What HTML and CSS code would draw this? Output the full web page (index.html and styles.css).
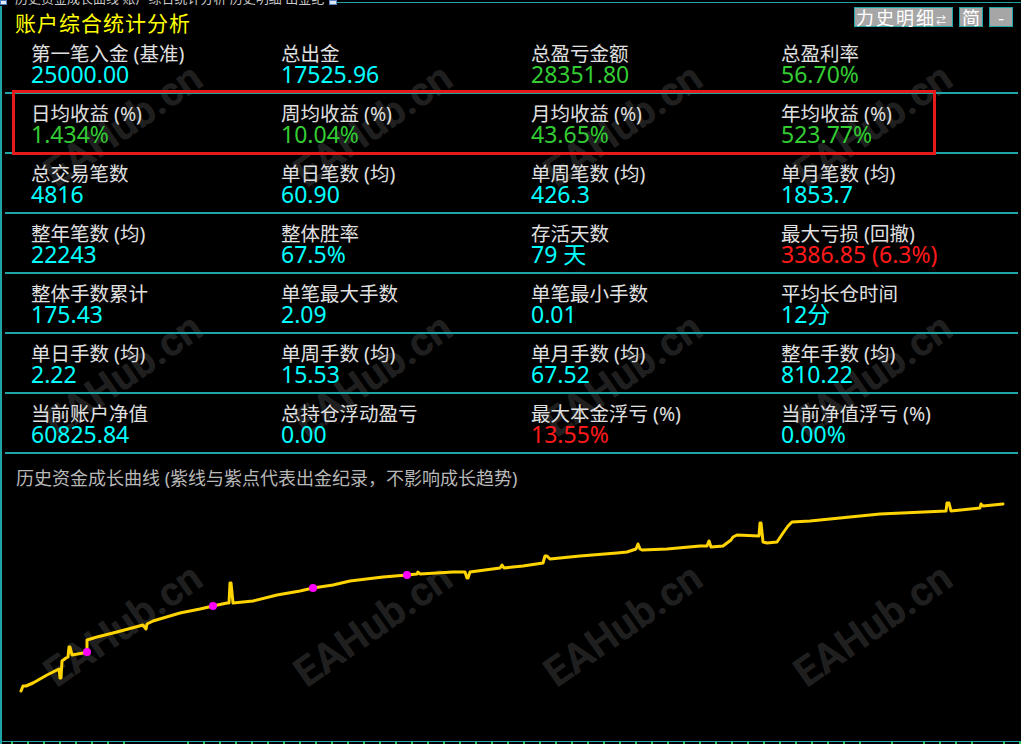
FILE: index.html
```html
<!DOCTYPE html>
<html lang="zh-CN">
<head>
<meta charset="utf-8">
<title>账户综合统计分析</title>
<link rel="stylesheet" href="styles.css">
</head>
<body>
<div class="window">
  <div class="wm-layer">
    <div class="wm"><span>EAHub.cn</span></div>
    <div class="wm"><span>EAHub.cn</span></div>
    <div class="wm"><span>EAHub.cn</span></div>
    <div class="wm"><span>EAHub.cn</span></div>
    <div class="wm"><span>EAHub.cn</span></div>
    <div class="wm"><span>EAHub.cn</span></div>
    <div class="wm"><span>EAHub.cn</span></div>
    <div class="wm"><span>EAHub.cn</span></div>
    <div class="wm"><span>EAHub.cn</span></div>
    <div class="wm"><span>EAHub.cn</span></div>
    <div class="wm"><span>EAHub.cn</span></div>
    <div class="wm"><span>EAHub.cn</span></div>
  </div>

  <div class="main">
    <div class="chrome">
      <div class="chrome-icon"></div>
      <div class="chrome-text">历史资金成长曲线 账户综合统计分析 历史明细 出金纪录 统计分析数据</div>
      <div class="chrome-box"></div>
      <div class="chrome-line"></div>
    </div>

    <div class="frame">
      <header class="head">
        <h1 class="title">账户综合统计分析</h1>
        <div class="btns">
          <div class="btn btn-hist">力史明细<span class="arrows">⇄</span></div>
          <div class="btn btn-sm">简</div>
          <div class="btn btn-sm">-</div>
        </div>
      </header>

      <section class="stats">
        <div class="row">
          <div class="cell"><div class="lbl">第一笔入金 (基准)</div><div class="val">25000.00</div></div>
          <div class="cell"><div class="lbl">总出金</div><div class="val">17525.96</div></div>
          <div class="cell"><div class="lbl">总盈亏金额</div><div class="val g">28351.80</div></div>
          <div class="cell"><div class="lbl">总盈利率</div><div class="val g">56.70%</div></div>
        </div>
        <div class="row">
          <div class="cell"><div class="lbl">日均收益 (%)</div><div class="val g">1.434%</div></div>
          <div class="cell"><div class="lbl">周均收益 (%)</div><div class="val g">10.04%</div></div>
          <div class="cell"><div class="lbl">月均收益 (%)</div><div class="val g">43.65%</div></div>
          <div class="cell"><div class="lbl">年均收益 (%)</div><div class="val g">523.77%</div></div>
        </div>
        <div class="row">
          <div class="cell"><div class="lbl">总交易笔数</div><div class="val">4816</div></div>
          <div class="cell"><div class="lbl">单日笔数 (均)</div><div class="val">60.90</div></div>
          <div class="cell"><div class="lbl">单周笔数 (均)</div><div class="val">426.3</div></div>
          <div class="cell"><div class="lbl">单月笔数 (均)</div><div class="val">1853.7</div></div>
        </div>
        <div class="row">
          <div class="cell"><div class="lbl">整年笔数 (均)</div><div class="val">22243</div></div>
          <div class="cell"><div class="lbl">整体胜率</div><div class="val">67.5%</div></div>
          <div class="cell"><div class="lbl">存活天数</div><div class="val">79 天</div></div>
          <div class="cell"><div class="lbl">最大亏损 (回撤)</div><div class="val r">3386.85 (6.3%)</div></div>
        </div>
        <div class="row">
          <div class="cell"><div class="lbl">整体手数累计</div><div class="val">175.43</div></div>
          <div class="cell"><div class="lbl">单笔最大手数</div><div class="val">2.09</div></div>
          <div class="cell"><div class="lbl">单笔最小手数</div><div class="val">0.01</div></div>
          <div class="cell"><div class="lbl">平均长仓时间</div><div class="val">12分</div></div>
        </div>
        <div class="row">
          <div class="cell"><div class="lbl">单日手数 (均)</div><div class="val">2.22</div></div>
          <div class="cell"><div class="lbl">单周手数 (均)</div><div class="val">15.53</div></div>
          <div class="cell"><div class="lbl">单月手数 (均)</div><div class="val">67.52</div></div>
          <div class="cell"><div class="lbl">整年手数 (均)</div><div class="val">810.22</div></div>
        </div>
        <div class="row">
          <div class="cell"><div class="lbl">当前账户净值</div><div class="val">60825.84</div></div>
          <div class="cell"><div class="lbl">总持仓浮动盈亏</div><div class="val">0.00</div></div>
          <div class="cell"><div class="lbl">最大本金浮亏 (%)</div><div class="val r">13.55%</div></div>
          <div class="cell"><div class="lbl">当前净值浮亏 (%)</div><div class="val">0.00%</div></div>
        </div>
      </section>

      <section class="chart">
        <p class="chart-title">历史资金成长曲线 (紫线与紫点代表出金纪录，不影响成长趋势)</p>
        <svg class="curve" width="1019" height="256" viewBox="2 488 1019 256" xmlns="http://www.w3.org/2000/svg">
          <polyline fill="none" stroke="#ffd400" stroke-width="3" stroke-linejoin="round" stroke-linecap="round"
            points="21,691 23,686 26,686 33,683 47,675 57,670 59,669 60,678 61,678 62,661 66,658 68,657 69,647 70,647 72,655 83,653 87,652 87,640 97,637 117,632 143,625 146,629 147,624 153,621 180,613 200,609 213,606 227,603 229,603 230,583 231,583 233,603 253,601 277,595 300,591 313,588 333,585 350,581 383,577 407,575 417,574 418,572 420,574 453,572 465,572 467,578 468,578 470,572 500,568 502,565 504,568 523,566 543,563 545,556 547,556 550,559 580,556 617,553 627,552 636,549 638,544 640,549 642,550 667,549 700,546 707,546 709,541 711,547 723,546 731,540 733,537 737,535 759,536 760,523 761,523 763,542 767,543 777,542 783,533 788,526 792,522 810,521 880,514 946,511 947,503 949,503 951,511 980,508 981,504 983,506 1003,504"/>
          <circle cx="87" cy="652" r="4" fill="#ff00ff"/>
          <circle cx="213" cy="606" r="4" fill="#ff00ff"/>
          <circle cx="313" cy="588" r="4" fill="#ff00ff"/>
          <circle cx="407" cy="575" r="4" fill="#ff00ff"/>
          <rect x="2" y="741" width="1019" height="1" fill="#1fa5a5"/>
          <g fill="#2ec84a">
            <rect x="11" y="742" width="2" height="3"/><rect x="27" y="742" width="2" height="3"/><rect x="43" y="742" width="2" height="3"/><rect x="59" y="742" width="2" height="3"/><rect x="75" y="742" width="2" height="3"/><rect x="91" y="742" width="2" height="3"/><rect x="107" y="742" width="2" height="3"/><rect x="123" y="742" width="2" height="3"/>
            <rect x="187" y="742" width="2" height="3"/><rect x="203" y="742" width="2" height="3"/><rect x="219" y="742" width="2" height="3"/><rect x="235" y="742" width="2" height="3"/><rect x="251" y="742" width="2" height="3"/><rect x="267" y="742" width="2" height="3"/><rect x="283" y="742" width="2" height="3"/><rect x="299" y="742" width="2" height="3"/><rect x="315" y="742" width="2" height="3"/><rect x="331" y="742" width="2" height="3"/><rect x="347" y="742" width="2" height="3"/>
            <rect x="363" y="742" width="2" height="3"/><rect x="379" y="742" width="2" height="3"/><rect x="395" y="742" width="2" height="3"/><rect x="411" y="742" width="2" height="3"/><rect x="427" y="742" width="2" height="3"/><rect x="443" y="742" width="2" height="3"/><rect x="459" y="742" width="2" height="3"/><rect x="475" y="742" width="2" height="3"/><rect x="491" y="742" width="2" height="3"/><rect x="507" y="742" width="2" height="3"/><rect x="523" y="742" width="2" height="3"/><rect x="539" y="742" width="2" height="3"/><rect x="555" y="742" width="2" height="3"/><rect x="571" y="742" width="2" height="3"/><rect x="587" y="742" width="2" height="3"/><rect x="603" y="742" width="2" height="3"/><rect x="619" y="742" width="2" height="3"/><rect x="635" y="742" width="2" height="3"/><rect x="651" y="742" width="2" height="3"/><rect x="667" y="742" width="2" height="3"/><rect x="683" y="742" width="2" height="3"/><rect x="699" y="742" width="2" height="3"/>
            <rect x="715" y="742" width="2" height="3"/><rect x="731" y="742" width="2" height="3"/><rect x="747" y="742" width="2" height="3"/><rect x="763" y="742" width="2" height="3"/><rect x="779" y="742" width="2" height="3"/><rect x="795" y="742" width="2" height="3"/><rect x="811" y="742" width="2" height="3"/><rect x="827" y="742" width="2" height="3"/><rect x="843" y="742" width="2" height="3"/><rect x="859" y="742" width="2" height="3"/><rect x="891" y="742" width="2" height="3"/><rect x="923" y="742" width="2" height="3"/><rect x="939" y="742" width="2" height="3"/><rect x="955" y="742" width="2" height="3"/><rect x="971" y="742" width="2" height="3"/><rect x="1003" y="742" width="2" height="3"/><rect x="1019" y="742" width="2" height="3"/>
          </g>
        </svg>
      </section>
    </div>
  </div>

  <div class="hl-box"></div>
</div>
</body>
</html>
```

FILE: styles.css
```css
* {
  box-sizing: border-box;
  margin: 0;
  padding: 0;
}

html,
body {
  background: #000;
}

body {
  width: 1021px;
  height: 744px;
  overflow: hidden;
  font-family: "Noto Sans", "Noto Sans CJK SC", sans-serif;
}

.window {
  position: relative;
  width: 1021px;
  height: 744px;
}

/* watermark grid (under content) */
.wm-layer {
  position: absolute;
  left: -2px;
  top: 0;
  z-index: 0;
  display: grid;
  grid-template-columns: repeat(4, 250px);
  grid-template-rows: repeat(3, 250px);
}

.wm {
  display: flex;
  align-items: center;
  justify-content: center;
}

.wm span {
  font-family: Roboto, "Noto Sans", sans-serif;
  font-weight: 700;
  font-size: 41px;
  color: rgba(255, 255, 255, 0.15);
  transform: rotate(-35deg);
  white-space: nowrap;
}

.main {
  position: relative;
  z-index: 1;
  display: flex;
  flex-direction: column;
  height: 744px;
}

/* clipped window chrome on top */
.chrome {
  display: flex;
  height: 6px;
  overflow: hidden;
}

.chrome-icon {
  width: 7px;
  height: 5px;
  background: #e4ecf4;
  border: 1px solid #4d7fc4;
}

.chrome-text {
  width: 318px;
  margin-top: -9px;
  padding-left: 8px;
  font-size: 13px;
  line-height: 14px;
  color: #c8c8c8;
  white-space: nowrap;
  overflow: hidden;
}

.chrome-box {
  width: 8px;
  height: 5px;
  margin-left: 4px;
  border: 1px solid #5a86c8;
  background: #dfe6ee;
}

.chrome-line {
  flex: 1;
  margin-top: 2px;
  border-top: 1px solid #1fa5a5;
}

.frame {
  flex: 1;
  display: flex;
  flex-direction: column;
  border-left: 2px solid #1fa5a5;
}

/* header */
.head {
  display: flex;
  justify-content: space-between;
  height: 28px;
  padding-left: 13px;
  padding-right: 8px;
}

.title {
  margin-top: 3px;
  font-family: "Noto Sans CJK SC", sans-serif;
  font-weight: 400;
  font-size: 21px;
  letter-spacing: 1px;
  line-height: 26px;
  color: #ffff00;
}

.btns {
  display: flex;
  gap: 6px;
  margin-top: 1px;
}

.btn {
  display: flex;
  align-items: center;
  justify-content: center;
  height: 20px;
  border: 1px solid #1fa5a5;
  background: #a6a6a6;
  color: #ffffff;
  font-family: "Noto Sans CJK SC", sans-serif;
  font-size: 18px;
  line-height: 18px;
  white-space: nowrap;
}

.btn-hist {
  width: 99px;
  justify-content: flex-start;
  padding-left: 1px;
  letter-spacing: 2px;
}

.arrows {
  margin-left: 0;
  font-size: 10px;
  line-height: 10px;
  padding-top: 6px;
  letter-spacing: 0;
}

.btn-sm {
  width: 24px;
}

/* stats grid */
.stats {
  margin-left: 3px;
  width: 1013px;
}

.row {
  display: grid;
  grid-template-columns: repeat(4, 250px);
  height: 60px;
  padding: 10px 0 0 26px;
  border-bottom: 2px solid #1fa5a5;
}

.lbl {
  font-size: 19.5px;
  line-height: 19px;
  color: #e0e0e0;
  white-space: nowrap;
}

.val {
  font-size: 23px;
  line-height: 23px;
  color: #00ffff;
  white-space: nowrap;
}

.val.g {
  color: #33cc33;
}

.val.r {
  color: #ff1a1a;
}

/* chart */
.chart {
  flex: 1;
  display: flex;
  flex-direction: column;
  padding-top: 14px;
}

.chart-title {
  padding-left: 14px;
  font-size: 18px;
  line-height: 20px;
  color: #b8b8b8;
  white-space: nowrap;
}

.curve {
  display: block;
}

/* red highlight frame drawn over the second row */
.hl-box {
  position: absolute;
  left: 12px;
  top: 90px;
  width: 924px;
  height: 65px;
  border: 3px solid #e51a1a;
  z-index: 2;
}
```
